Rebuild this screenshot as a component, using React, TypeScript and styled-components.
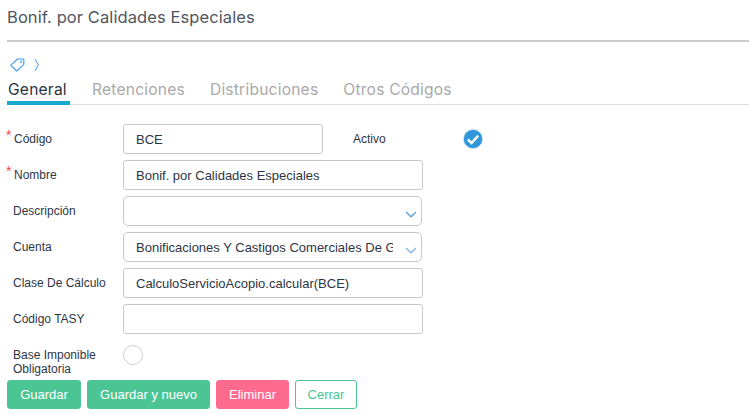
import React from "react";
import styled, { createGlobalStyle } from "styled-components";

const Global = createGlobalStyle`
  html, body { margin: 0; padding: 0; background: #fff; }
  body { font-family: "Liberation Sans", Arial, sans-serif; width: 749px; height: 414px; overflow: hidden; }
  * { box-sizing: border-box; }
`;

const Page = styled.div`
  width: 749px;
  height: 414px;
  padding-left: 7px;
  display: flex;
  flex-direction: column;
`;

const Header = styled.header`
  height: 42px;
  border-bottom: 2px solid #cccccf;
  padding-top: 7px;
`;

const Title = styled.h1`
  margin: 0;
  font: 400 16.5px/20px Inter, "Open Sans", sans-serif;
  letter-spacing: 0.09px;
  color: #50565e;
`;

const Crumbs = styled.div`
  height: 24px;
  margin-top: 11px;
  padding-left: 3px;
  display: flex;
  align-items: center;
  gap: 9px;
`;

const Tabs = styled.nav`
  height: 28px;
  display: flex;
  gap: 25px;
  border-bottom: 1px solid #dddddd;
`;

const Tab = styled.div<{ $active?: boolean }>`
  height: 28px;
  padding: 0 ${(p) => (p.$active ? "1px" : "0")};
  min-width: ${(p) => (p.$active ? "63px" : "0")};
  margin-right: ${(p) => (p.$active ? "-3px" : "0")};
  font: 400 15.6px/26px Inter, "Open Sans", sans-serif;
  letter-spacing: 0.2px;
  color: ${(p) => (p.$active ? "#2a3342" : "#a9a9a9")};
  border-bottom: ${(p) => (p.$active ? "4px solid #17aacf" : "none")};
`;

const Form = styled.div`
  margin-top: 19px;
  display: grid;
  grid-template-columns: 116px auto;
  grid-auto-rows: 30px;
  row-gap: 6px;
  justify-content: start;
`;

const Label = styled.label<{ $required?: boolean; $top?: boolean }>`
  position: relative;
  padding-left: ${(p) => (p.$required ? "7px" : "6px")};
  font-size: 12px;
  line-height: 14px;
  color: #2d3545;
  align-self: ${(p) => (p.$top ? "start" : "center")};
  margin-top: ${(p) => (p.$top ? "8px" : "0")};
  ${(p) =>
    p.$required &&
    `&::before {
      content: "*";
      position: absolute;
      left: -1px;
      top: -4px;
      color: #ef4b4b;
      font-size: 14px;
    }`}
`;

const Field = styled.div`
  display: flex;
  align-items: center;
`;

const Input = styled.input<{ $w: number }>`
  width: ${(p) => p.$w}px;
  height: 30px;
  padding: 0 12px;
  border: 1px solid #c8c8c8;
  border-radius: 3px;
  font: 13px "Liberation Sans", Arial, sans-serif;
  color: #2d3545;
  background: #fff;
  outline: none;
`;

const SelectWrap = styled.div`
  position: relative;
  width: 299px;
  height: 30px;
`;

const Select = styled.select`
  appearance: none;
  width: 299px;
  height: 30px;
  padding: 0 28px 0 12px;
  border: 1px solid #c8c8c8;
  border-radius: 5px;
  font: 13px "Liberation Sans", Arial, sans-serif;
  color: #2d3545;
  background: #fff;
  outline: none;
`;

const Caret = styled.svg<{ $pale?: boolean }>`
  position: absolute;
  right: 5px;
  top: 15px;
  opacity: ${(p) => (p.$pale ? 0.75 : 1)};
`;

const ActiveLabel = styled.span`
  width: 110px;
  margin-left: 30px;
  font-size: 12px;
  color: #2d3545;
`;

const Radio = styled.span`
  width: 20px;
  height: 20px;
  border: 1px solid #cfcfcf;
  border-radius: 50%;
  background: #fff;
`;

const Actions = styled.div`
  margin-top: 10px;
  display: flex;
  gap: 6px;
`;

const Button = styled.button<{ $w: number; $kind: "ok" | "danger" | "line" }>`
  width: ${(p) => p.$w}px;
  height: 29px;
  padding: 0;
  border-radius: 3px;
  font: 13px "Liberation Sans", Arial, sans-serif;
  border: 1px solid ${(p) => (p.$kind === "danger" ? "#ff6b8f" : "#4bc593")};
  background: ${(p) => (p.$kind === "ok" ? "#4bc593" : p.$kind === "danger" ? "#ff6b8f" : "#fff")};
  color: ${(p) => (p.$kind === "line" ? "#4bc593" : "#fff")};
`;

const Chevron = ({ pale }: { pale?: boolean }) => (
  <Caret $pale={pale} width="12" height="7" viewBox="0 0 12 7" fill="none">
    <path d="M1 1 L6 5.8 L11 1" stroke="#5b9bd8" strokeWidth="1.2" />
  </Caret>
);

const ACCOUNT = "Bonificaciones Y Castigos Comerciales De Granos";

export default function App() {
  return (
    <Page>
      <Global />
      <Header>
        <Title>Bonif. por Calidades Especiales</Title>
      </Header>
      <Crumbs>
        <svg width="15" height="14" viewBox="0 0 15 14" fill="none">
          <path d="M0.8 7.2 L7.6 1 L13.8 1 L13.8 6.4 L6.8 13 Z" stroke="#3d9df0" strokeWidth="1.1" strokeLinejoin="round" />
          <circle cx="11" cy="3.8" r="0.9" stroke="#3d9df0" strokeWidth="0.8" />
        </svg>
        <svg width="6" height="14" viewBox="0 0 6 14" fill="none">
          <path d="M1 1 L4.4 7 L1 13" stroke="#3d9df0" strokeWidth="1" />
        </svg>
      </Crumbs>
      <Tabs>
        <Tab $active>General</Tab>
        <Tab>Retenciones</Tab>
        <Tab>Distribuciones</Tab>
        <Tab>Otros Códigos</Tab>
      </Tabs>
      <Form>
        <Label $required>Código</Label>
        <Field>
          <Input $w={200} defaultValue="BCE" />
          <ActiveLabel>Activo</ActiveLabel>
          <svg width="20" height="20" viewBox="0 0 20 20">
            <circle cx="10" cy="10" r="9.6" fill="#2f97da" stroke="#d5e6f2" strokeWidth="0.8" />
            <path d="M4.8 10.5 L8.6 14 L15.2 6.6" fill="none" stroke="#fff" strokeWidth="2.4" />
          </svg>
        </Field>
        <Label $required>Nombre</Label>
        <Field><Input $w={300} defaultValue="Bonif. por Calidades Especiales" /></Field>
        <Label>Descripción</Label>
        <Field>
          <SelectWrap>
            <Select defaultValue=""><option value=""></option></Select>
            <Chevron />
          </SelectWrap>
        </Field>
        <Label>Cuenta</Label>
        <Field>
          <SelectWrap>
            <Select defaultValue={ACCOUNT}><option value={ACCOUNT}>{ACCOUNT}</option></Select>
            <Chevron pale />
          </SelectWrap>
        </Field>
        <Label>Clase De Cálculo</Label>
        <Field><Input $w={300} defaultValue="CalculoServicioAcopio.calcular(BCE)" /></Field>
        <Label>Código TASY</Label>
        <Field><Input $w={300} /></Field>
        <Label $top>Base Imponible Obligatoria</Label>
        <Field><Radio /></Field>
      </Form>
      <Actions>
        <Button $w={74} $kind="ok">Guardar</Button>
        <Button $w={123} $kind="ok">Guardar y nuevo</Button>
        <Button $w={73} $kind="danger">Eliminar</Button>
        <Button $w={62} $kind="line">Cerrar</Button>
      </Actions>
    </Page>
  );
}
